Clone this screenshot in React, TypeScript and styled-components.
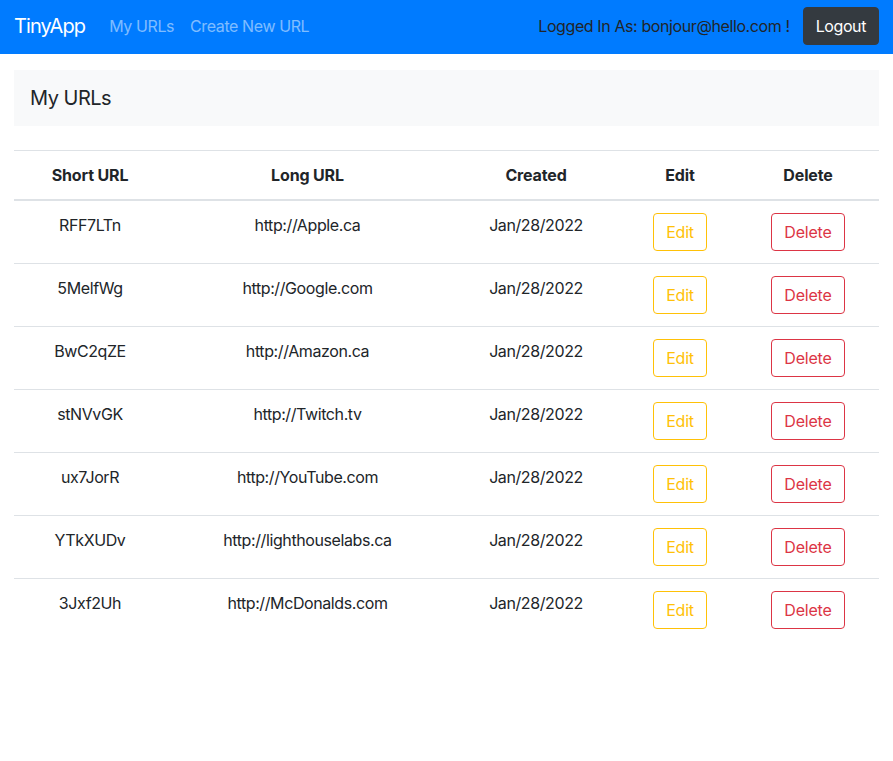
import React from "react";
import styled, { createGlobalStyle } from "styled-components";

const Global = createGlobalStyle`
  html, body { margin: 0; padding: 0; background: #fff; }
  body {
    font-family: Inter, "Liberation Sans", Arial, sans-serif;
    font-size: 16px;
    line-height: 1.5;
    letter-spacing: -0.4px;
    color: #212529;
  }
  * { box-sizing: border-box; }
`;

const Navbar = styled.nav`
  display: flex;
  align-items: center;
  height: 54px;
  padding: 7px 14px 9px;
  background: #007bff;
`;

const Brand = styled.a`
  font-size: 20px;
  line-height: 30px;
  letter-spacing: -0.9px;
  color: #fff;
  text-decoration: none;
  margin-right: 16px;
`;

const NavLinks = styled.div`
  display: flex;
  flex: 1;
`;

const NavLink = styled.a`
  padding: 8px;
  color: rgba(255, 255, 255, 0.5);
  text-decoration: none;
`;

const UserArea = styled.div`
  display: flex;
  align-items: center;
  gap: 13px;
`;

const UserText = styled.span`
  color: #212529;
`;

const LogoutButton = styled.button`
  font-family: inherit;
  font-size: 16px;
  line-height: 24px;
  letter-spacing: inherit;
  padding: 6px 12px;
  border-radius: 4px;
  border: 1px solid #343a40;
  background: #343a40;
  color: #fff;
`;

const Main = styled.main`
  padding: 16px 14px;
`;

const Header = styled.div`
  background: #f8f9fa;
  height: 56px;
  display: flex;
  align-items: center;
  padding: 0 16px;
  font-size: 20px;
  letter-spacing: -0.5px;
  margin-bottom: 24px;
`;

const Table = styled.table`
  width: 100%;
  border-collapse: collapse;
  text-align: center;
`;

const Th = styled.th<{ $w: number }>`
  width: ${(p) => p.$w}px;
  padding: 12px;
  font-weight: 700;
  line-height: 24px;
  letter-spacing: -0.15px;
  border-top: 1px solid #dee2e6;
  border-bottom: 2px solid #dee2e6;
  vertical-align: bottom;
`;

const Td = styled.td`
  padding: 12px;
  line-height: 24px;
  border-bottom: 1px solid #dee2e6;
  vertical-align: top;
`;

const Row = styled.tr`
  &:last-child td { border-bottom: none; }
`;

const OutlineButton = styled.button<{ $color: string }>`
  font-family: inherit;
  font-size: 16px;
  line-height: 24px;
  letter-spacing: -0.2px;
  padding: 6px 12px;
  border-radius: 4px;
  background: transparent;
  border: 1px solid ${(p) => p.$color};
  color: ${(p) => p.$color};
`;

const rows = [
  ["RFF7LTn", "http://Apple.ca"],
  ["5MelfWg", "http://Google.com"],
  ["BwC2qZE", "http://Amazon.ca"],
  ["stNVvGK", "http://Twitch.tv"],
  ["ux7JorR", "http://YouTube.com"],
  ["YTkXUDv", "http://lighthouselabs.ca"],
  ["3Jxf2Uh", "http://McDonalds.com"],
];

export default function App() {
  return (
    <>
      <Global />
      <Navbar>
        <Brand>TinyApp</Brand>
        <NavLinks>
          <NavLink>My URLs</NavLink>
          <NavLink>Create New URL</NavLink>
        </NavLinks>
        <UserArea>
          <UserText>Logged In As: bonjour@hello.com !</UserText>
          <LogoutButton>Logout</LogoutButton>
        </UserArea>
      </Navbar>
      <Main>
        <Header>My URLs</Header>
        <Table>
          <thead>
            <tr>
              <Th $w={152}>Short URL</Th>
              <Th $w={283}>Long URL</Th>
              <Th $w={174}>Created</Th>
              <Th $w={114}>Edit</Th>
              <Th $w={142}>Delete</Th>
            </tr>
          </thead>
          <tbody>
            {rows.map(([s, l]) => (
              <Row key={s}>
                <Td>{s}</Td>
                <Td>{l}</Td>
                <Td>Jan/28/2022</Td>
                <Td>
                  <OutlineButton $color="#ffc107">Edit</OutlineButton>
                </Td>
                <Td>
                  <OutlineButton $color="#dc3545">Delete</OutlineButton>
                </Td>
              </Row>
            ))}
          </tbody>
        </Table>
      </Main>
    </>
  );
}
